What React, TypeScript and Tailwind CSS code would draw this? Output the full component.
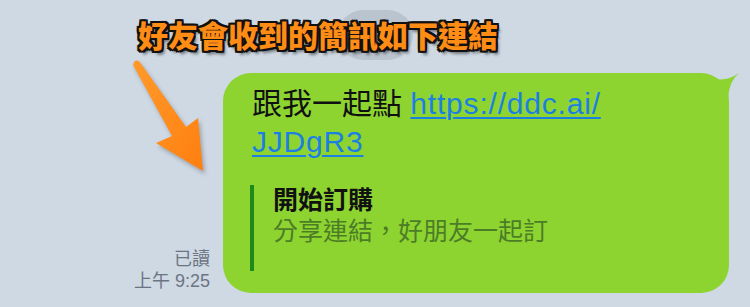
import React from "react";

const cjk = '"Liberation Sans", "Noto Sans CJK TC", sans-serif';

function Arrow() {
  return (
    <svg
      className="absolute left-0 top-0 [filter:drop-shadow(2px_3px_2px_rgba(0,0,0,0.25))]"
      width="230"
      height="190"
      viewBox="0 0 230 190"
    >
      <defs>
        <linearGradient id="arrowFill" x1="0" y1="0" x2="1" y2="1">
          <stop offset="0" stopColor="#ff9a2a" />
          <stop offset="1" stopColor="#ff7f10" />
        </linearGradient>
      </defs>
      <path
        d="M133 65 Q134 59 139 61 L186 127 L198 118 L203 171 L156 143 L172 136 Z"
        fill="url(#arrowFill)"
      />
    </svg>
  );
}

function Tail() {
  return (
    <svg className="absolute right-[-14px] top-[-3px]" width="44" height="28" viewBox="0 0 44 28">
      <path d="M2 3 Q22 16 40 3 Q31 10 29 27 L2 27 Z" fill="#8dd431" />
    </svg>
  );
}

export default function App() {
  return (
    <div
      className="relative w-[750px] h-[307px] overflow-hidden bg-[#cfd9e4]"
      style={{ fontFamily: cjk }}
    >
      {/* date chip peeking behind the caption */}
      <div className="absolute left-[338px] top-[10px] w-[75px] h-[50px] rounded-full bg-[#bac4cf]" />

      <div className="relative flex flex-col">
        <h1
          className="ml-[138px] mt-[15px] h-[44px] text-[30px] leading-[44px] font-black text-[#ff8c14] [text-shadow:-2px_-2px_0_#111,2px_-2px_0_#111,-2px_2px_0_#111,2px_2px_0_#111,0_-2px_0_#111,0_2px_0_#111,-2px_0_0_#111,2px_0_0_#111,3px_4px_3px_rgba(0,0,0,0.45)]"
        >
          好友會收到的簡訊如下連結
        </h1>

        <div className="mt-[14px] flex items-end">
          {/* read status */}
          <div className="w-[223px] pr-[13px] pb-[1px] flex flex-col items-end text-[18px] leading-[22px] text-[#6b7482]">
            <span>已讀</span>
            <span>上午 9:25</span>
          </div>

          {/* message bubble */}
          <div className="relative w-[506px] h-[220px] rounded-[28px] bg-[#8dd431] pl-[29px] pt-[12px]">
            <Tail />
            <p className="text-[30px] leading-[38px] text-[#111]">
              跟我一起點{" "}
              <span className="text-[#1b80e2] underline decoration-[2px] underline-offset-[3px] tracking-[0.8px]">
                https://ddc.ai/
                <br />
                JJDgR3
              </span>
            </p>

            <div className="mt-[26px] ml-[-2px] h-[86px] border-l-4 border-[#1f8a1c] pl-[19px]">
              <div className="text-[25px] leading-[30px] font-bold text-[#111] mt-[-2px]">開始訂購</div>
              <div className="text-[25px] leading-[32px] text-[#4c7d26]">分享連結，好朋友一起訂</div>
            </div>
          </div>
        </div>
      </div>

      <Arrow />
    </div>
  );
}
